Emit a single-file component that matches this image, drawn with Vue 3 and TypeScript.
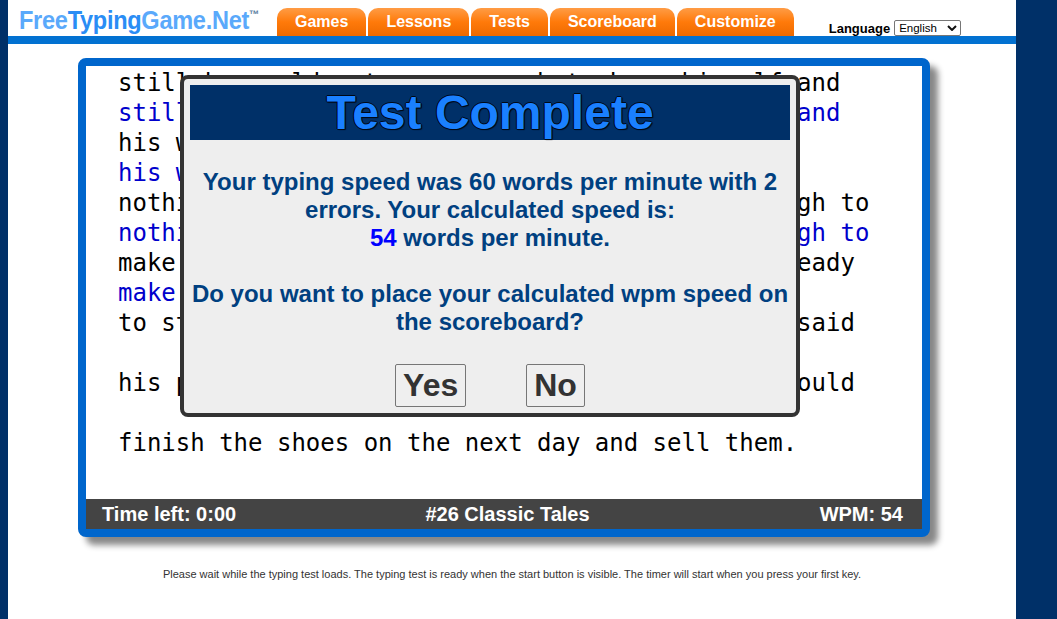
<script setup lang="ts">
const tabs: string[] = ['Games', 'Lessons', 'Tests', 'Scoreboard', 'Customize']
const lines: { text: string; typed?: boolean }[] = [
  { text: 'still he could not earn enough to keep himself and' },
  { text: 'still he could not earn enough to keep himself and', typed: true },
  { text: 'his wife. Soon they had very little left and' },
  { text: 'his wife. Soon they had very little left and', typed: true },
  { text: 'nothing left but a piece of leather barely enough to' },
  { text: 'nothing left but a piece of leather barely enough to', typed: true },
  { text: 'make one pair of shoes. He then cut them out, ready' },
  { text: 'make one pair of shoes. He then cut them out,', typed: true },
  { text: 'to start work in the morning. That evening, he said' },
  { text: '\u00a0', typed: true },
  { text: 'his prayers and went to sleep, hoping that he could' },
  { text: '\u00a0', typed: true },
  { text: 'finish the shoes on the next day and sell them.' }
]
</script>

<template>
  <div class="page">
    <div class="sheet">
      <header class="top">
        <div class="logo-box">
          <div class="logo"><span class="l1">Free</span><span class="l2">Typing</span><span class="l1">Game.Net</span><sup class="tm">™</sup></div>
        </div>
        <nav class="tabs">
          <a v-for="t in tabs" :key="t" class="tab">{{ t }}</a>
        </nav>
        <div class="lang">
          <label class="lang-label">Language</label>
          <div class="lang-wrap">
            <select class="lang-select"><option>English</option></select>
            <svg class="chev" width="10" height="6" viewBox="0 0 10 6" aria-hidden="true">
              <path d="M1 1l4 4 4-4" fill="none" stroke="#111" stroke-width="2" />
            </svg>
          </div>
        </div>
      </header>

      <main class="stage">
        <section class="panel">
          <div class="text">
            <div v-for="(l, i) in lines" :key="i" class="line" :class="{ typed: l.typed }">{{ l.text }}</div>
          </div>
          <div class="status">
            <span>Time left: 0:00</span>
            <span class="mid">#26 Classic Tales</span>
            <span class="right">WPM: 54</span>
          </div>
          <div class="dialog">
            <h1 class="title">Test Complete</h1>
            <p class="msg">
              Your typing speed was 60 words per minute with 2 errors. Your calculated speed is:<br />
              <b class="num">54</b> words per minute.<br /><br />
              Do you want to place your calculated wpm speed on the scoreboard?
            </p>
            <div class="btns">
              <button class="btn">Yes</button>
              <button class="btn">No</button>
            </div>
          </div>
        </section>
        <p class="note">Please wait while the typing test loads. The typing test is ready when the start button is visible. The timer will start when you press your first key.</p>
      </main>
    </div>
  </div>
</template>

<style>
html, body { margin: 0; padding: 0; overflow: hidden; }
</style>

<style scoped>
.page {
  height: 619px;
  background: #003068;
  padding: 0 41px 0 8px;
  overflow: hidden;
  font-family: "Liberation Sans", Arial, sans-serif;
}
.sheet { background: #fff; height: 619px; }
.top {
  display: flex;
  align-items: flex-end;
  height: 36px;
  border-bottom: 8px solid #0271d1;
}
.logo-box {
  width: 258px;
  padding-left: 11px;
  box-sizing: border-box;
  align-self: flex-start;
  margin-top: 5px;
}
.logo {
  transform: scaleX(0.905);
  transform-origin: left center;
  font-size: 26px;
  line-height: 30px;
  font-weight: 700;
  letter-spacing: -0.3px;
  white-space: nowrap;
}
.l1 { color: #5aa9fb; }
.l2 { color: #2a8df5; }
.tm { font-size: 11px; line-height: 0; color: #55799c; vertical-align: 11px; }
.tabs { display: flex; gap: 2px; margin-left: 11px; }
.tab {
  display: block;
  height: 28px;
  line-height: 27px;
  padding: 0 18px;
  font-size: 16px;
  font-weight: 700;
  color: #fff;
  border-radius: 10px 10px 0 0;
  background: linear-gradient(#ff9c45, #ff7a0a 50%, #ee6a00);
}
.lang { display: flex; align-items: center; gap: 4px; margin-left: 35px; height: 16px; }
.lang-label { font-size: 13px; font-weight: 700; color: #000; }
.lang-wrap { position: relative; display: flex; }
.lang-select {
  appearance: none;
  width: 67px;
  height: 16px;
  box-sizing: border-box;
  border: 1px solid #767676;
  border-radius: 2px;
  font-size: 11.5px;
  line-height: 14px;
  font-family: "Liberation Sans", Arial, sans-serif;
  padding: 0 0 0 4px;
  background: #fff;
  color: #000;
}
.chev { position: absolute; right: 4px; top: 5px; }
.stage { padding: 14px 0 0 70px; }
.panel {
  position: relative;
  width: 836px;
  border: 8px solid #0066cc;
  border-radius: 8px;
  box-shadow: 8px 8px 6px #888;
  background: #fff;
}
.text {
  height: 431px;
  padding: 2px 0 0 32px;
  overflow: hidden;
  font-family: "DejaVu Sans Mono", monospace;
  font-size: 24px;
  line-height: 30px;
  color: #000;
  white-space: pre;
}
.typed { color: #0000cc; }
.status {
  display: grid;
  grid-template-columns: 1fr auto 1fr;
  height: 30px;
  line-height: 30px;
  padding: 0 19px 0 16px;
  background: #444;
  color: #fff;
  font-size: 20px;
  font-weight: 700;
}
.mid { margin-left: 10px; }
.right { text-align: right; }
.dialog {
  position: absolute;
  left: 94px;
  top: 9px;
  width: 600px;
  height: 322px;
  padding: 6px;
  border: 4px solid #333;
  border-radius: 8px;
  background: #eee;
  text-align: center;
}
.title {
  margin: 0;
  height: 55px;
  line-height: 55px;
  font-size: 48px;
  font-weight: 700;
  color: #1a80ff;
  background: #003068;
  text-shadow: 1px 0 0 #000814, -1px 0 0 #000814, 0 1px 0 #000814, 0 -1px 0 #000814, 1px 1px 1px #000814;
}
.msg {
  margin: 28px 0;
  font-size: 24px;
  line-height: 28px;
  font-weight: 700;
  color: #004080;
}
.num { color: #0000ff; }
.btns { display: flex; justify-content: center; gap: 60px; }
.btn {
  height: 43px;
  padding: 0 7px;
  box-sizing: border-box;
  font-family: "Liberation Sans", Arial, sans-serif;
  font-size: 32px;
  font-weight: 700;
  color: #333;
  background: #efefef;
  border: 1px solid #767676;
  border-radius: 2px;
}
.note {
  margin: 30px 0 0 -70px;
  text-align: center;
  font-size: 11px;
  line-height: 14px;
  color: #333;
}
</style>
